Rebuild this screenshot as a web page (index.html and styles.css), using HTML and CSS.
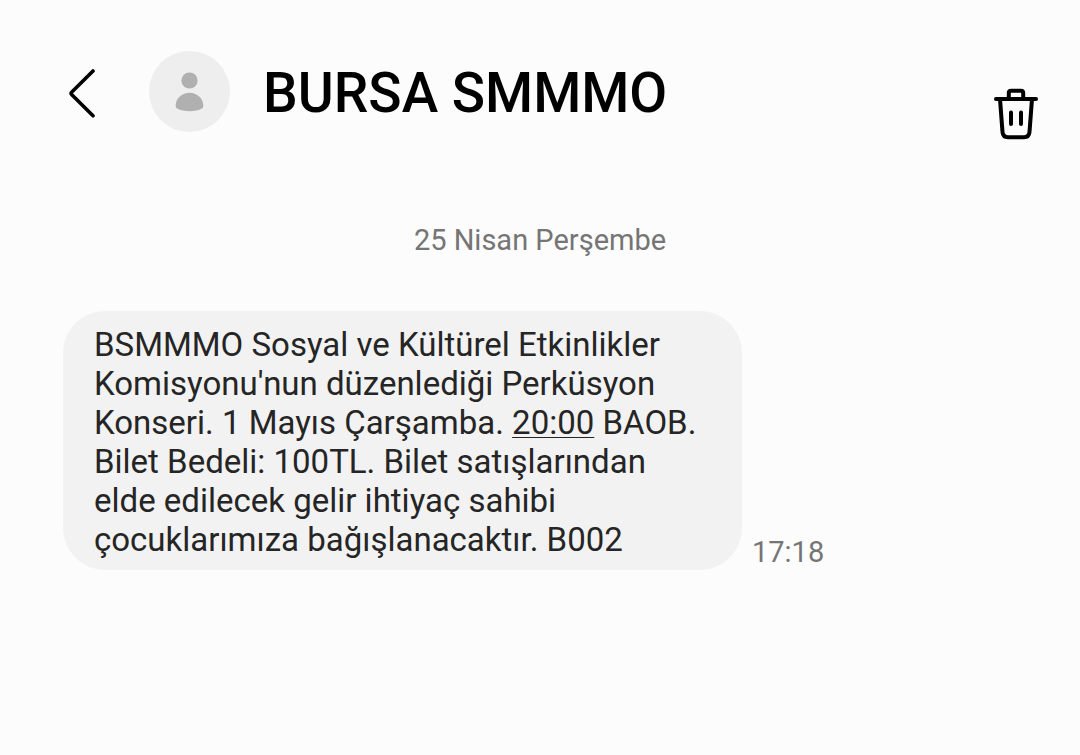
FILE: index.html
```html
<!DOCTYPE html>
<html lang="tr">
<head>
<meta charset="utf-8">
<meta name="viewport" content="width=device-width, initial-scale=1">
<title>BURSA SMMMO</title>
<link rel="stylesheet" href="styles.css">
</head>
<body>
<header class="bar">
  <button class="icon-button back" type="button" aria-label="Geri">
    <svg width="28" height="50" viewBox="0 0 28 50" fill="none" stroke="#000" stroke-width="3.6" stroke-linecap="round" stroke-linejoin="round"><path d="M25 3 3.600 24.200Q2.600 25.300 3.600 26.400L25 47.800"/></svg>
  </button>
  <div class="avatar" aria-hidden="true">
    <svg width="81" height="81" viewBox="0 0 81 81" fill="#b0b0b0"><circle cx="40.500" cy="29.500" r="8.100"/><path d="M40.500 41.800C48 41.800 54.300 47.500 54.300 54.500Q54.300 56.800 53 57.500C49.500 59.400 45 60.200 40.500 60.200S31.500 59.400 28 57.500Q26.700 56.800 26.700 54.500C26.700 47.500 33 41.800 40.500 41.800z"/></svg>
  </div>
  <h1 class="title">BURSA SMMMO</h1>
  <button class="icon-button trash" type="button" aria-label="Sil">
    <svg width="45" height="52" viewBox="0 0 45 52" fill="none" stroke="#000" stroke-width="4" stroke-linecap="round" stroke-linejoin="round"><path d="M3 11H43M15.800 11V5Q15.800 2.700 18.100 2.700H27.900Q30.200 2.700 30.200 5V11M7 11 9.500 44Q10 49.200 15 49.200H31Q36 49.200 36.500 44L39 11M18 24.500V36M28 24.500V36"/></svg>
  </button>
</header>
<main class="thread">
  <h2 class="date">25 Nisan Perşembe</h2>
  <article class="message">
    <p class="bubble">BSMMMO Sosyal ve Kültürel Etkinlikler Komisyonu'nun düzenlediği Perküsyon Konseri. 1 Mayıs Çarşamba. <a class="link" href="#">20:00</a> BAOB. Bilet Bedeli: 100TL. Bilet satışlarından elde edilecek gelir ihtiyaç sahibi çocuklarımıza bağışlanacaktır. B002</p>
    <time class="time" datetime="17:18">17:18</time>
  </article>
</main>
</body>
</html>
```
FILE: styles.css
```css
* { box-sizing: border-box; }
body {
  margin: 0;
  background: #fcfcfc;
  color: #252525;
  font-family: Roboto, "Liberation Sans", sans-serif;
}
.bar {
  display: flex;
  align-items: flex-start;
  padding: 51px 42px 0 68px;
}
.icon-button {
  display: block;
  flex: none;
  padding: 0;
  border: 0;
  background: none;
  cursor: pointer;
}
.icon-button svg,
.avatar svg { display: block; }
.back { margin-top: 17px; }
.avatar {
  flex: none;
  margin-left: 53px;
  border-radius: 50%;
  background: #eee;
}
.title {
  flex: 1;
  margin: 0 0 0 33px;
  color: #000;
  font-size: 55px;
  font-weight: 500;
  line-height: 84px;
}
.trash { margin-top: 37px; }
.thread { padding: 80px 63px 32px; }
.date {
  margin: 0;
  color: #757575;
  font-size: 29px;
  font-weight: 400;
  line-height: 40px;
  text-align: center;
}
.message {
  display: flex;
  align-items: flex-end;
  gap: 10px;
  margin-top: 51px;
}
.bubble {
  max-width: 679px;
  margin: 0;
  padding: 14px 31px 11px;
  border-radius: 42px;
  background: #f2f2f2;
  font-size: 33px;
  line-height: 39px;
}
.link {
  color: inherit;
  text-decoration-thickness: 1px;
  text-underline-offset: 3px;
}
.time {
  color: #757575;
  font-size: 29px;
  line-height: 36px;
}
```
